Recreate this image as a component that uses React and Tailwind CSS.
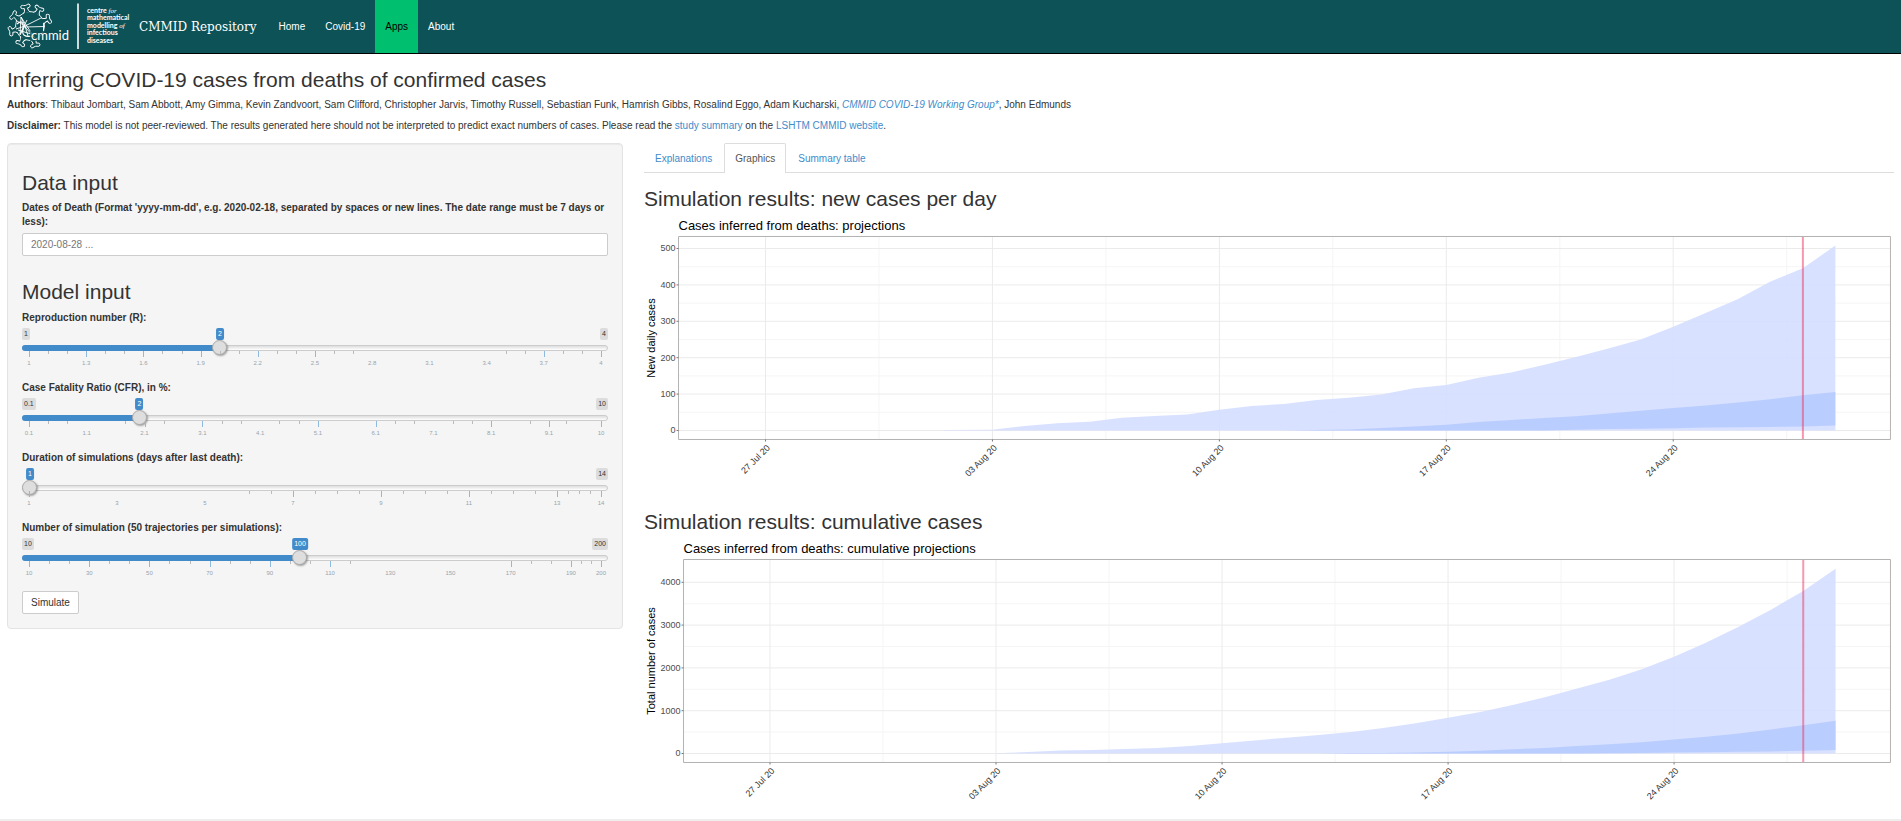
import React, { useState } from "react";

const NAV = ["Home", "Covid-19", "Apps", "About"];

const SLIDERS = [
  {
    id: "r", label: "Reproduction number (R):", min: 1, max: 4, step: 0.1, value: 2,
    labels: [[1, 0], [1.3, 10], [1.6, 20], [1.9, 30], [2.2, 40], [2.5, 50], [2.8, 60], [3.1, 70], [3.4, 80], [3.7, 90], [4, 100]],
    major: [0, 10, 20, 30, 40, 50, 90, 100],
    minor: [3.33, 6.67, 13.33, 16.67, 23.33, 26.67, 33.33, 36.67, 43.33, 46.67, 53.33, 56.67, 83.33, 86.67, 93.33, 96.67],
  },
  {
    id: "cfr", label: "Case Fatality Ratio (CFR), in %:", min: 0.1, max: 10, step: 0.1, value: 2,
    labels: [[0.1, 0], [1.1, 10.1], [2.1, 20.2], [3.1, 30.3], [4.1, 40.4], [5.1, 50.5], [6.1, 60.6], [7.1, 70.7], [8.1, 80.8], [9.1, 90.9], [10, 100]],
    major: [0, 20.2, 30.3, 50.5, 60.6, 80.8, 90.9, 100],
    minor: [3.37, 6.73, 16.8, 23.57, 33.67, 37.03, 43.77, 47.13, 63.97, 67.33, 74.07, 77.43, 87.53, 93.93],
  },
  {
    id: "duration", label: "Duration of simulations (days after last death):", min: 1, max: 14, step: 1, value: 1,
    labels: [[1, 0], [3, 15.38], [5, 30.77], [7, 46.15], [9, 61.54], [11, 76.92], [13, 92.31], [14, 100]],
    major: [0, 46.15, 61.54, 76.92, 92.31, 100],
    minor: [38.46, 42.31, 50, 53.85, 57.69, 65.38, 69.23, 73.08, 80.77, 84.62, 88.46, 94.23, 96.15, 98.08],
  },
  {
    id: "count", label: "Number of simulation (50 trajectories per simulations):", min: 10, max: 200, step: 10, value: 100,
    labels: [[10, 0], [30, 10.53], [50, 21.05], [70, 31.58], [90, 42.11], [110, 52.63], [130, 63.16], [150, 73.68], [170, 84.21], [190, 94.74], [200, 100]],
    major: [0, 10.53, 21.05, 31.58, 42.11, 52.63, 84.21, 94.74, 100],
    minor: [3.51, 7.02, 14.04, 17.54, 24.56, 28.07, 35.09, 38.6, 45.61, 49.12, 56.14, 87.72, 91.23, 96.49, 98.25],
  },
];

const SPIKES = [-103, -62, -21, 75, 119, 165, 213];

function Logo() {
  return (
    <svg className="h-12 w-32 shrink-0" viewBox="0 0 128 48" fill="none" stroke="#fff" strokeWidth="0.9" role="img" aria-label="CMMID">
      <g transform="translate(23 23)">
        <circle r="14.5" />
        {SPIKES.map((angle) => (
          <path
            key={angle}
            transform={`rotate(${angle})`}
            fill="#0d5257"
            d="M13.6 -3.4 Q15 -1.6 18.2 -1.6 Q18.4 -3.6 19.2 -4.6 Q20.8 -5.4 21.8 -3.8 Q22 -2.6 21.3 -1.6 Q20.8 0 21.3 1.6 Q22 2.8 21.6 4 Q20.6 5.4 19 4.4 Q18.2 3.4 18.2 1.6 Q15 1.6 13.6 3.4"
          />
        ))}
        <path d="M-5 0 L11 -8 M-5 1 L14.5 0.5 M13.5 -3 V5 M-5 0 L-9 -9 M-5 0 L-13 -5 M-5 0 L-14 3 M-5 0 L-10 9 M-5 0 L-2 10 M-9 -9 L4 11 M-10 8 L-3 -6 M-12 4 L1 8 M-9 -9 L-10 9 M-5 1 L5 12" />
        <path d="M-13 -2 Q-6 -8 -7 3 Q-9 12 2 10" strokeWidth="1.2" />
      </g>
      <path d="M23 28 H64 V38 H23 Z" fill="#0d5257" stroke="none" opacity="0.75" />
      <path d="M71 0.5 V46" strokeWidth="1.6" />
      <g fill="#fff" stroke="none">
        <text x="24" y="37" className="font-['Lato','Open_Sans',sans-serif] text-[13px]">cmmid</text>
        <g className="font-['Lato','Open_Sans',sans-serif] text-[7px] font-bold">
          <text x="80" y="10">centre <tspan className="font-['Liberation_Serif',serif] font-normal italic">for</tspan></text>
          <text x="80" y="17">mathematical</text>
          <text x="80" y="25">modelling <tspan className="font-['Liberation_Serif',serif] font-normal italic">of</tspan></text>
          <text x="80" y="32">infectious</text>
          <text x="80" y="40">diseases</text>
        </g>
      </g>
    </svg>
  );
}

function Slider({ id, label, min, max, step, value: initial, labels, major, minor }) {
  const [value, setValue] = useState(initial);
  const share = ((value - min) / (max - min)) * 100;
  const near = share < 3;
  return (
    <div className="mb-3.5">
      <label htmlFor={id} className="block leading-[14px] font-bold">{label}</label>
      <div className="relative mt-[3px] flex h-3 justify-between text-[7px] leading-3 text-[#333]">
        <span className={near ? "invisible" : "rounded-xs bg-[#dcdcdc] px-0.5"}>{min}</span>
        <span className="rounded-xs bg-[#dcdcdc] px-0.5">{max}</span>
        <div className="absolute inset-x-2 top-0 h-3">
          <output htmlFor={id} className="absolute -translate-x-1/2 rounded-xs bg-[#428bca] px-0.5 text-white" style={{ left: `${share}%` }}>
            {value}
          </output>
        </div>
      </div>
      <div className="relative h-[15px]">
        <div className="absolute inset-x-0 top-[5px] h-1.5 rounded-full border border-[#ccc] bg-linear-to-b from-[#dedede] to-white" />
        <div className="absolute inset-x-2 top-[5px] h-1.5">
          <div className={near ? "hidden" : "-ml-2 box-content h-full rounded-l-full bg-[#428bca] pl-2"} style={{ width: `${share}%` }} />
        </div>
        <input
          id={id}
          type="range"
          min={min}
          max={max}
          step={step}
          value={value}
          onChange={(e) => setValue(Number(e.target.value))}
          className="relative m-0 block h-[15px] w-full appearance-none bg-transparent [&::-webkit-slider-thumb]:size-[15px] [&::-webkit-slider-thumb]:appearance-none [&::-webkit-slider-thumb]:rounded-full [&::-webkit-slider-thumb]:border [&::-webkit-slider-thumb]:border-[#aaa] [&::-webkit-slider-thumb]:bg-[#dedede] [&::-webkit-slider-thumb]:shadow-[1px_1px_2px_rgba(0,0,0,0.35)]"
        />
      </div>
      <div className="relative mx-[7px] -mt-1 h-4 text-[6px] leading-2 text-[#99a4ac]" aria-hidden="true">
        {major.map((t) => (
          <span key={t} className="absolute top-0 h-1.5 w-px bg-[#8fb9dd]" style={{ left: `${t}%` }} />
        ))}
        {minor.map((t) => (
          <span key={t} className="absolute top-0 h-[3px] w-px bg-[#bbb]" style={{ left: `${t}%` }} />
        ))}
        {labels.map(([text, t]) => (
          <span key={text} className="absolute top-2 -translate-x-1/2" style={{ left: `${t}%` }}>{text}</span>
        ))}
      </div>
    </div>
  );
}

const DATES = ["27 Jul 20", "03 Aug 20", "10 Aug 20", "17 Aug 20", "24 Aug 20"];
const TOP = 20.5;
const BOTTOM = 223.5;
const RIGHT = 1246.5;

const DAILY = {
  title: "Cases inferred from deaths: projections",
  axis: "New daily cases",
  left: 34.5, x0: 121.5, day: 32.42, y0: 214.5, unit: 0.364,
  ticks: [0, 100, 200, 300, 400, 500],
  half: [50, 150, 250, 350, 450],
  outer: [[5.5, 1], [7, 2], [8, 12], [9, 20], [10, 24], [11, 35], [12, 40], [13, 44], [14, 57], [15, 67], [16, 73], [17, 84], [18, 90], [19, 99], [20, 116], [21, 125], [22, 145], [23, 159], [24, 180], [25, 202], [26, 225], [27, 250], [28, 285], [29, 323], [30, 361], [31, 409], [32, 446], [33, 508]],
  upper: [[16, 0], [17, 1], [18, 3], [19, 7], [20, 11], [21, 16], [22, 23], [23, 29], [24, 34], [25, 39], [26, 47], [27, 54], [28, 62], [29, 69], [30, 77], [31, 86], [32, 97], [33, 106]],
  lower: [[33, 14], [32, 11], [31, 10], [30, 9], [29, 8], [28, 6], [27, 5], [26, 4], [25, 2], [24, 0], [16, 0]],
};

const CUMULATIVE = {
  title: "Cases inferred from deaths: cumulative projections",
  axis: "Total number of cases",
  left: 39.5, x0: 126, day: 32.29, y0: 214.5, unit: 0.0428,
  ticks: [0, 1000, 2000, 3000, 4000],
  half: [500, 1500, 2500, 3500],
  outer: [[7, 5], [8, 35], [9, 70], [10, 85], [11, 105], [12, 130], [13, 175], [14, 240], [15, 305], [16, 370], [17, 432], [18, 505], [19, 595], [20, 705], [21, 835], [22, 970], [23, 1130], [24, 1316], [25, 1520], [26, 1725], [27, 1970], [28, 2260], [29, 2590], [30, 2960], [31, 3360], [32, 3800], [33, 4315]],
  upper: [[17, 0], [18, 10], [19, 15], [20, 25], [21, 40], [22, 65], [23, 100], [24, 132], [25, 172], [26, 214], [27, 265], [28, 325], [29, 392], [30, 465], [31, 560], [32, 662], [33, 765]],
  lower: [[33, 85], [32, 62], [31, 50], [30, 40], [29, 30], [28, 20], [27, 12], [26, 8], [25, 0], [17, 0]],
};

function Chart({ title, axis, left, x0, day, y0, unit, ticks, half, outer, upper, lower }) {
  const x = (d) => x0 + d * day;
  const y = (v) => y0 - v * unit;
  const points = (list) => list.map(([d, v]) => `${x(d).toFixed(1)},${y(v).toFixed(1)}`).join(" ");
  const first = outer[0][0];
  return (
    <svg className="block h-auto w-full font-['Liberation_Sans',Arial,sans-serif]" viewBox="0 0 1250 267" role="img" aria-label={title}>
      <text x={left} y="14" className="fill-black text-[13px]">{title}</text>
      <g stroke="#f5f5f5">
        {half.map((v) => <path key={v} d={`M${left} ${y(v)} H${RIGHT}`} />)}
        {DATES.map((name, i) => <path key={name} d={`M${x(i * 7 + 3.5)} ${TOP} V${BOTTOM}`} />)}
      </g>
      <g stroke="#ebebeb">
        {ticks.map((v) => <path key={v} d={`M${left} ${y(v)} H${RIGHT}`} />)}
        {DATES.map((name, i) => <path key={name} d={`M${x(i * 7)} ${TOP} V${BOTTOM}`} />)}
      </g>
      <polygon fill="#d3ddff" fillOpacity="0.88" points={`${points(outer)} ${x(33)},${y(0)} ${x(first)},${y(0)}`} />
      <polygon fill="#b8cbff" fillOpacity="0.95" points={`${points(upper)} ${points(lower)}`} />
      <path d={`M${x(32)} ${TOP} V${BOTTOM}`} stroke="#f0325f" strokeOpacity="0.5" strokeWidth="2" />
      <path d={`M${left} ${TOP} H${RIGHT} V${BOTTOM} H${left} Z`} fill="none" stroke="#b3b3b3" />
      <g className="fill-[#4d4d4d] text-[9px]">
        {ticks.map((v) => (
          <g key={v}>
            <path d={`M${left - 2} ${y(v)} h2`} stroke="#777" />
            <text x={left - 3} y={y(v) + 3} textAnchor="end">{v}</text>
          </g>
        ))}
        {DATES.map((name, i) => (
          <g key={name} className="fill-[#333]">
            <path d={`M${x(i * 7)} ${BOTTOM} v2`} stroke="#777" />
            <text transform={`translate(${x(i * 7) + 5} ${BOTTOM + 9}) rotate(-45)`} textAnchor="end">{name}</text>
          </g>
        ))}
      </g>
      <text transform={`translate(11 ${(TOP + BOTTOM) / 2}) rotate(-90)`} textAnchor="middle" className="fill-black text-[11px]">{axis}</text>
    </svg>
  );
}

const LINK = "text-[#428bca] hover:underline";

export default function App() {
  return (
    <div className="min-h-screen bg-white font-['Liberation_Sans',Arial,sans-serif] text-[10px] text-[#333]">
      <header className="flex h-[54px] items-stretch border-b border-black bg-[#0d5257] text-white">
        <a href="#home" className="flex items-center pl-[7px]">
          <Logo />
          <span className="pl-1 font-['DejaVu_Serif',serif] text-[12px]">CMMID Repository</span>
        </a>
        <nav className="flex pl-3">
          {NAV.map((name) => (
            <a
              key={name}
              href={`#${name.toLowerCase()}`}
              className={name === "Apps" ? "flex items-center bg-[#00bf6f] px-2.5 text-black" : "flex items-center px-2.5"}
            >
              {name}
            </a>
          ))}
        </nav>
      </header>

      <main className="px-[7px]">
        <h1 className="mt-[15px] text-[21px] leading-[22px]">Inferring COVID-19 cases from deaths of confirmed cases</h1>
        <p className="mt-[7px] leading-[14px]">
          <b>Authors</b>: Thibaut Jombart, Sam Abbott, Amy Gimma, Kevin Zandvoort, Sam Clifford, Christopher Jarvis, Timothy Russell, Sebastian Funk, Hamrish Gibbs, Rosalind Eggo, Adam Kucharski,{" "}
          <a href="#group" className={LINK}><i>CMMID COVID-19 Working Group*</i></a>, John Edmunds
        </p>
        <p className="mt-[7px] leading-[14px]">
          <b>Disclaimer:</b> This model is not peer-reviewed. The results generated here should not be interpreted to predict exact numbers of cases. Please read the{" "}
          <a href="#summary" className={LINK}>study summary</a> on the <a href="#lshtm" className={LINK}>LSHTM CMMID website</a>.
        </p>

        <div className="mt-2.5 flex items-start">
          <div className="w-1/3 pr-[13px]">
            <form className="rounded-sm border border-[#e3e3e3] bg-[#f5f5f5] p-3.5 shadow-[inset_0_1px_1px_rgba(0,0,0,0.05)]" onSubmit={(e) => e.preventDefault()}>
              <h2 className="mt-3.5 text-[21px] leading-[22px]">Data input</h2>
              <label htmlFor="dates" className="mt-[7px] block leading-[14px] font-bold">
                Dates of Death (Format 'yyyy-mm-dd', e.g. 2020-02-18, separated by spaces or new lines. The date range must be 7 days or less):
              </label>
              <input
                id="dates"
                type="text"
                placeholder="2020-08-28 ..."
                className="mt-1 block h-[23px] w-full rounded-xs border border-[#ccc] bg-white px-2 placeholder:text-[#777]"
              />
              <h2 className="mt-[25px] mb-2 text-[21px] leading-[22px]">Model input</h2>
              {SLIDERS.map((s) => <Slider key={s.id} {...s} />)}
              <button type="submit" className="block h-[23px] rounded-xs border border-[#ccc] bg-white px-2">Simulate</button>
            </form>
          </div>

          <section className="w-2/3 pl-2">
            <div role="tablist" className="flex border-b border-[#ddd]">
              <button role="tab" aria-selected="false" className="mr-px h-[29px] border border-b-0 border-transparent px-2.5 text-[#428bca]">Explanations</button>
              <button role="tab" aria-selected="true" className="-mb-px mr-px h-[30px] rounded-t-xs border border-b-0 border-[#ddd] bg-white px-2.5 text-[#555]">Graphics</button>
              <button role="tab" aria-selected="false" className="h-[29px] border border-b-0 border-transparent px-2.5 text-[#428bca]">Summary table</button>
            </div>
            <h2 className="mt-[15px] mb-1.5 text-[21px] leading-[22px]">Simulation results: new cases per day</h2>
            <Chart {...DAILY} />
            <h2 className="mt-7 mb-1.5 text-[21px] leading-[22px]">Simulation results: cumulative cases</h2>
            <Chart {...CUMULATIVE} />
          </section>
        </div>
      </main>
      <hr className="mt-[13px] border-t-2 border-[#eee]" />
    </div>
  );
}
